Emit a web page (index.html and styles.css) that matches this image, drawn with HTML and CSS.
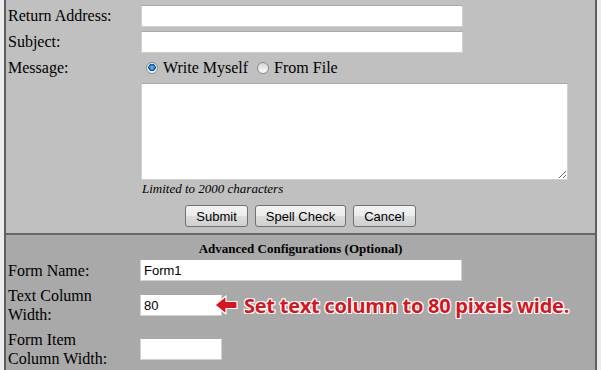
FILE: index.html
```html
<!DOCTYPE html>
<html lang="en">
<head>
    <meta charset="UTF-8">
    <title>Contact Form Setup</title>
    <link rel="stylesheet" href="styles.css">
</head>
<body>
    <div class="panel">
        <section class="compose">
            <div class="row">
                <label class="lbl" for="return-address">Return Address:</label>
                <input class="field field-wide" id="return-address" type="text">
            </div>
            <div class="row">
                <label class="lbl" for="subject">Subject:</label>
                <input class="field field-wide" id="subject" type="text">
            </div>
            <div class="row">
                <span class="lbl">Message:</span>
                <div class="choice">
                    <label class="option"><input class="radio" type="radio" name="source" checked>Write Myself</label>
                    <label class="option option-next"><input class="radio" type="radio" name="source">From File</label>
                </div>
            </div>
            <div class="row row-top">
                <span class="lbl"></span>
                <div class="message">
                    <textarea class="message-box"></textarea>
                    <p class="limit">Limited to 2000 characters</p>
                </div>
            </div>
            <div class="actions">
                <button class="btn" type="button">Submit</button>
                <button class="btn" type="button">Spell Check</button>
                <button class="btn" type="button">Cancel</button>
            </div>
        </section>

        <section class="advanced">
            <h2>Advanced Configurations (Optional)</h2>
            <div class="row">
                <label class="lbl lbl-narrow" for="form-name">Form Name:</label>
                <input class="field field-wide" id="form-name" type="text" value="Form1">
            </div>
            <div class="row row-tall">
                <label class="lbl lbl-narrow" for="text-width">Text Column Width:</label>
                <input class="field field-small" id="text-width" type="text" value="80">
                <div class="callout">
                    <svg class="arrow" width="24" height="20" viewBox="0 0 24 20">
                        <path d="M1 10 L12 1 L12 6.5 L23 6.5 L23 13.5 L12 13.5 L12 19 Z" fill="#d8151c" stroke="#fff" stroke-width="1.2" stroke-linejoin="round"/>
                    </svg>
                    <span class="callout-text">Set text column to 80 pixels wide.</span>
                </div>
            </div>
            <div class="row row-tall">
                <label class="lbl lbl-narrow" for="item-width">Form Item Column Width:</label>
                <input class="field field-small" id="item-width" type="text">
            </div>
        </section>
    </div>
</body>
</html>
```

FILE: styles.css
```css
/* styles.css */
body {
    margin: 0;
    background-color: #ececec;
    font-family: "Liberation Serif", "Times New Roman", serif;
    font-size: 16px;
    color: #000;
}

.panel {
    margin-left: 4px;
    width: 589px;
    border-left: 2px solid #5f5f5f;
    border-right: 2px solid #5f5f5f;
}

.compose {
    background-color: #c0c0c0;
    padding: 3px 0 6px;
}

.row {
    display: flex;
    align-items: center;
    min-height: 26px;
}

.row-top {
    align-items: flex-start;
}

.row-tall {
    padding: 3px 0;
}

.lbl {
    flex: none;
    width: 133px;
    padding-left: 2px;
}

.lbl-narrow {
    width: 115px;
    margin-right: 17px;
    line-height: 19px;
}

.field {
    box-sizing: border-box;
    height: 22px;
    margin: 0;
    padding: 0 3px;
    background-color: #fff;
    border: 1px solid #d0d0d0;
    border-top-color: #a9a9a9;
    font-family: "Liberation Sans", Arial, sans-serif;
    font-size: 13px;
    color: #000;
    outline: none;
}

.field-wide {
    width: 322px;
}

.field-small {
    width: 82px;
}

.choice {
    display: flex;
    align-items: center;
}

.option {
    display: flex;
    align-items: center;
}

.option-next {
    margin-left: 4px;
}

.radio {
    appearance: none;
    -webkit-appearance: none;
    width: 12px;
    height: 12px;
    margin: 0 5px;
    border: 1px solid #8c8c8c;
    border-radius: 50%;
    background: linear-gradient(#d6d6d6, #fbfbfb);
}

.radio:checked {
    background: radial-gradient(circle at 50% 45%, #7fd0ff 0, #2b86d6 2px, #0b4f9c 3.5px, #e9e9e9 4px, #fbfbfb 6px);
}

.message-box {
    display: block;
    box-sizing: border-box;
    width: 427px;
    height: 97px;
    margin: 2px 0 0;
    border: 1px solid #d0d0d0;
    border-top-color: #a9a9a9;
    background-color: #fff;
    outline: none;
}

.limit {
    margin: 0;
    padding-left: 1px;
    font-size: 13px;
    font-style: italic;
    line-height: 18px;
}

.actions {
    display: flex;
    justify-content: center;
    gap: 7px;
    margin-top: 7px;
}

.btn {
    height: 22px;
    padding: 0 10px;
    border: 1px solid #707070;
    border-radius: 3px;
    background: linear-gradient(#f3f3f3, #ebebeb 50%, #dddddd 50%, #cfcfcf);
    font-family: "Liberation Sans", Arial, sans-serif;
    font-size: 13px;
    color: #000;
}

.advanced {
    background-color: #a9a9a9;
    border-top: 2px solid #666;
}

.advanced h2 {
    margin: 6px 0 0;
    font-size: 13px;
    line-height: 16px;
    text-align: center;
}

.callout {
    display: flex;
    align-items: center;
    margin-left: -8px;
}

.arrow {
    display: block;
}

.callout-text {
    margin-left: 6px;
    font-family: "Open Sans", sans-serif;
    font-weight: 700;
    font-size: 20px;
    letter-spacing: -0.25px;
    color: #d8151c;
    text-shadow: 1px 0 #fff, -1px 0 #fff, 0 1px #fff, 0 -1px #fff,
        1px 1px #fff, -1px -1px #fff, 1px -1px #fff, -1px 1px #fff;
}
```
